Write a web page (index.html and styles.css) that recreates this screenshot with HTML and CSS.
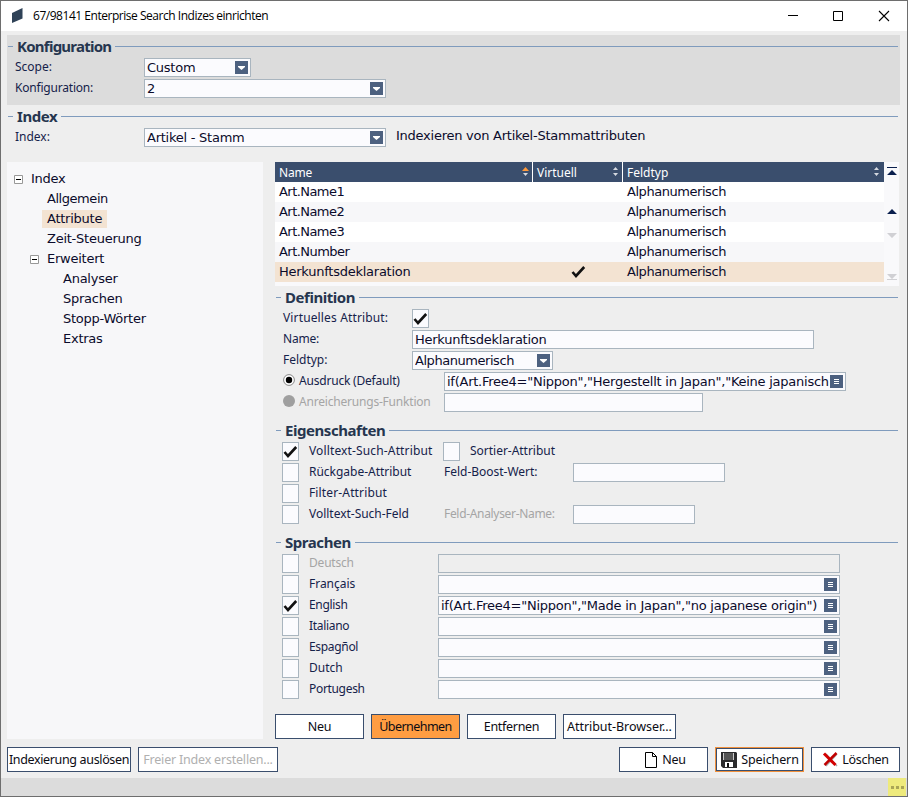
FILE: index.html
```html
<!DOCTYPE html>
<html lang="de">
<head>
<meta charset="utf-8">
<title>Enterprise Search Indizes einrichten</title>
<link rel="stylesheet" href="styles.css">
</head>
<body>
<svg class="defs" width="0" height="0" aria-hidden="true">
  <symbol id="check" viewBox="0 0 15 14"><path d="M1.500 7 5 11 13.200 2" fill="none" stroke="#111" stroke-width="2.600"/></symbol>
  <symbol id="drop" viewBox="0 0 13 13"><path d="M0 0h13v13H0z" fill="#4d6180"/><path d="M3 5h7v1L6.500 9 3 6z" fill="#fff"/></symbol>
  <symbol id="menu" viewBox="0 0 13 13"><path d="M0 0h13v13H0z" fill="#4d6180"/><path d="M4 4h5v1H4zM4 6h5v1H4zM4 8h5v1H4z" fill="#fff"/></symbol>
  <symbol id="minus" viewBox="0 0 9 9"><path d="M.5.5h8v8h-8z" fill="#fff" stroke="#989898"/><path d="M2 4h5v1H2z" fill="#000"/></symbol>
</svg>
<div class="window">
  <header class="titlebar">
    <svg class="logo" width="11" height="16" viewBox="0 0 11 16"><path d="M0 5 10.500 0v10.500L0 15z" fill="#2f4257"/></svg>
    <span class="caption">67/98141 Enterprise Search Indizes einrichten</span>
    <svg class="winctl" width="102" height="12" viewBox="0 0 102 12"><path d="M0 5.500h10M45.500 1.500h9v9h-9z" fill="none" stroke="#000"/><path d="M91 1l10 10M101 1 91 11" fill="none" stroke="#000" stroke-width="1.100"/></svg>
  </header>

  <section class="config">
    <h2 class="section"><span class="narrow">Konfiguration</span></h2>
    <div class="row"><label class="lbl">Scope:</label><div class="field w107"><span>Custom</span><svg><use href="#drop"/></svg></div></div>
    <div class="row"><label class="lbl tight">Konfiguration:</label><div class="field w242"><span>2</span><svg><use href="#drop"/></svg></div></div>
  </section>
  <section class="index">
    <h2 class="section"><span>Index</span></h2>
    <div class="row"><label class="lbl">Index:</label><div class="field w242"><span>Artikel - Stamm</span><svg><use href="#drop"/></svg></div><span class="hint">Indexieren von Artikel-Stammattributen</span></div>
  </section>

  <main class="main">
    <nav class="tree">
      <div class="node"><svg><use href="#minus"/></svg><span>Index</span></div>
      <div class="node l1"><span class="alpha">Allgemein</span></div>
      <div class="node l1 on"><span>Attribute</span></div>
      <div class="node l1"><span>Zeit-Steuerung</span></div>
      <div class="node l1e"><svg><use href="#minus"/></svg><span>Erweitert</span></div>
      <div class="node l2"><span>Analyser</span></div>
      <div class="node l2"><span>Sprachen</span></div>
      <div class="node l2"><span>Stopp-Wörter</span></div>
      <div class="node l2"><span>Extras</span></div>
    </nav>

    <div class="content">
      <div class="tablebox">
        <div class="table">
          <div class="tr th"><div><span class="tight">Name</span><svg class="sort"><path d="M0 4 3.500 0 7 4z" fill="#ff9a3c"/><path d="M1 6h5L3.500 9z" fill="#d5d9e0"/></svg></div><div><span>Virtuell</span><svg class="sort"><path d="M1 3 3.500 0 6 3zM1 6h5L3.500 9z" fill="#d5d9e0"/></svg></div><div><span>Feldtyp</span><svg class="sort"><path d="M1 3 3.500 0 6 3zM1 6h5L3.500 9z" fill="#d5d9e0"/></svg></div></div>
          <div class="tr"><div class="names">Art.Name1</div><div></div><div class="alpha">Alphanumerisch</div></div>
          <div class="tr"><div class="names">Art.Name2</div><div></div><div class="alpha">Alphanumerisch</div></div>
          <div class="tr"><div class="names">Art.Name3</div><div></div><div class="alpha">Alphanumerisch</div></div>
          <div class="tr"><div class="names">Art.Number</div><div></div><div class="alpha">Alphanumerisch</div></div>
          <div class="tr sel"><div>Herkunftsdeklaration</div><div class="mid"><svg class="chk"><use href="#check"/></svg></div><div class="alpha">Alphanumerisch</div></div>
        </div>
        <svg class="scroll" width="15" height="124" viewBox="0 0 15 124"><path d="M3 5h10v1H3zM3 13l5-5 5 5zM3 52l5-5 5 5z" fill="#0a1f4d"/><path d="M3 71h10l-5 5zM3 112h10l-5 5zM3 117h10v1H3z" fill="#d0d0d4"/></svg>
      </div>

      <section class="group defin">
        <h2 class="section"><span>Definition</span></h2>
        <div class="row"><label class="lbl loose">Virtuelles Attribut:</label><div class="box"><svg class="chk"><use href="#check"/></svg></div></div>
        <div class="row"><label class="lbl tight">Name:</label><div class="field w402"><span>Herkunftsdeklaration</span></div></div>
        <div class="row"><label class="lbl">Feldtyp:</label><div class="field w141"><span class="alpha">Alphanumerisch</span><svg><use href="#drop"/></svg></div></div>
        <div class="row radio"><svg class="rb" viewBox="0 0 12 12"><circle cx="6" cy="6" r="5.400" fill="#fff" stroke="#888"/><circle cx="6" cy="6" r="3.200" fill="#000"/></svg><label class="lbl tight">Ausdruck (Default)</label><div class="field w402"><span>if(Art.Free4="Nippon","Hergestellt in Japan","Keine japanisch</span><svg><use href="#menu"/></svg></div></div>
        <div class="row radio"><svg class="rb" viewBox="0 0 12 12"><circle cx="6" cy="6" r="6" fill="#9f9f9f"/></svg><label class="lbl off tight">Anreicherungs-Funktion</label><div class="field w259"></div></div>
      </section>

      <section class="group props">
        <h2 class="section"><span>Eigenschaften</span></h2>
        <div class="row"><div class="box"><svg class="chk"><use href="#check"/></svg></div><label class="lbl loose">Volltext-Such-Attribut</label><div class="box"></div><label class="lbl after">Sortier-Attribut</label></div>
        <div class="row"><div class="box"></div><label class="lbl">Rückgabe-Attribut</label><label class="lbl second">Feld-Boost-Wert:</label><div class="field w152"></div></div>
        <div class="row"><div class="box"></div><label class="lbl loose">Filter-Attribut</label></div>
        <div class="row"><div class="box"></div><label class="lbl">Volltext-Such-Feld</label><label class="lbl off second tighter">Feld-Analyser-Name:</label><div class="field w122"></div></div>
      </section>

      <section class="group langs">
        <h2 class="section"><span>Sprachen</span></h2>
        <div class="row"><div class="box"></div><label class="lbl off tight">Deutsch</label><div class="field w402 gray"></div></div>
        <div class="row"><div class="box"></div><label class="lbl">Français</label><div class="field w402"><span></span><svg><use href="#menu"/></svg></div></div>
        <div class="row"><div class="box"><svg class="chk"><use href="#check"/></svg></div><label class="lbl tighter">English</label><div class="field w402"><span>if(Art.Free4="Nippon","Made in Japan","no japanese origin")</span><svg><use href="#menu"/></svg></div></div>
        <div class="row"><div class="box"></div><label class="lbl tighter">Italiano</label><div class="field w402"><span></span><svg><use href="#menu"/></svg></div></div>
        <div class="row"><div class="box"></div><label class="lbl tighter">Espagñol</label><div class="field w402"><span></span><svg><use href="#menu"/></svg></div></div>
        <div class="row"><div class="box"></div><label class="lbl">Dutch</label><div class="field w402"><span></span><svg><use href="#menu"/></svg></div></div>
        <div class="row"><div class="box"></div><label class="lbl tighter">Portugesh</label><div class="field w402"><span></span><svg><use href="#menu"/></svg></div></div>
      </section>

      <div class="actions">
        <button class="btn">Neu</button><button class="btn hot">Übernehmen</button><button class="btn">Entfernen</button><button class="btn w113">Attribut-Browser...</button>
      </div>
    </div>
  </main>

  <footer class="footer">
    <button class="btn w124">Indexierung auslösen</button><button class="btn w140 dis">Freier Index erstellen...</button>
    <span class="spring"></span>
    <button class="btn new"><svg width="12" height="16" viewBox="0 0 12 16"><path d="M.5.5h7l4 4v11H.5z" fill="#fff" stroke="#000"/><path d="M7.500.5v4h4" fill="none" stroke="#000"/></svg><span>Neu</span></button>
    <button class="btn focus"><svg width="16" height="16" viewBox="0 0 16 16"><path d="M0 0h15l1 1v15H2l-2-2z" fill="#2b2b2d"/><path d="M3 1h9v7H3z" fill="#555"/><path d="M2 1h1v7H2zM12 1h1v7h-1z" fill="#ccc"/><path d="M4 10h8v5H4z" fill="#fff"/><path d="M6 11h2v4H6z" fill="#111"/></svg><span>Speichern</span></button>
    <button class="btn"><svg width="16" height="15" viewBox="0 0 16 15"><path d="M4 2l11 12M15 2 4 14" stroke="#aaa" stroke-width="1.500"/><path d="M2 1.500 13.500 13" stroke="#d40000" stroke-width="3"/><path d="M14.500 1 2.500 13" stroke="#c00000" stroke-width="2.500"/></svg><span>Löschen</span></button>
  </footer>
  <div class="status"><div class="grip"><i></i><i></i><i></i></div></div>
</div>
</body>
</html>
```
FILE: styles.css
```css
* { box-sizing: border-box; }
body { margin: 0; font: 13px/19px "DejaVu Sans", sans-serif; color: #0b0b2b; letter-spacing: -0.25px; }
svg { display: block; flex: none; }
.defs { position: absolute; }
.window { width: 908px; height: 797px; border: 1px solid #6e6e6e; background: #eee; display: flex; flex-direction: column; overflow: hidden; }
.titlebar { height: 30px; flex: none; background: #fff; display: flex; align-items: center; padding: 0 17px 0 11px; }
.caption { font: 12px/16px "Open Sans", sans-serif; letter-spacing: -0.47px; color: #000; margin-left: 10px; flex: 1; }
.winctl { margin-top: -1px; }

.section { margin: 0; height: 23px; display: flex; align-items: center; gap: 4px; font: bold 15px/20px "Noto Sans", sans-serif; letter-spacing: -0.45px; color: #26364f; white-space: nowrap; }
.section span { height: 22px; }
.section .narrow { letter-spacing: -0.75px; }
.section::before, .section::after { content: ""; height: 1px; background: #7f9bbd; width: 5px; }
.section::after { flex: 1; }
.row { display: flex; height: 19px; margin-bottom: 2px; }
.lbl { font: 12px/18px "Noto Sans", sans-serif; letter-spacing: -0.02px; color: #15224a; flex: none; white-space: nowrap; }
.loose { letter-spacing: 0.14px; }
.tight { letter-spacing: -0.2px; }
.tighter { letter-spacing: -0.32px; }
.off { color: #a5a5a5; }
.alpha { letter-spacing: -0.45px; }
.names { letter-spacing: -0.55px; }
.field { height: 19px; border: 1px solid #a9b5bf; background: #fbfbfe; display: flex; align-items: center; padding: 0 2px; flex: none; line-height: 17px; }
.field span { flex: 1; overflow: hidden; white-space: nowrap; }
.field svg { width: 13px; height: 13px; margin-left: 1px; }
.gray { background: #eee; }
.box { width: 17px; height: 19px; border: 1px solid #a9b5bf; background: #fbfbfe; flex: none; padding: 2px 0 0 0; }
.chk { width: 15px; height: 14px; }
.w107 { width: 107px; } .w242 { width: 242px; } .w402 { width: 402px; } .w141 { width: 141px; }
.w259 { width: 259px; } .w152 { width: 152px; } .w122 { width: 122px; }

.config { margin: 4px 7px 0 6px; height: 70px; background: #dcdcdc; padding: 0 2px 0 1px; flex: none; }
.index { margin: 0 9px 0 7px; height: 57px; flex: none; }
.config .lbl, .index .lbl { width: 129px; margin-left: 7px; }
.hint { margin-left: 10px; line-height: 15px; }

.main { display: flex; gap: 12px; margin-left: 6px; height: 577px; flex: none; }
.tree { width: 256px; background: #f7f7f9; padding-top: 7px; }
.node { height: 20px; display: flex; align-items: center; padding-left: 7px; }
.node svg { width: 9px; height: 9px; margin-right: 4px; }
.node span { padding: 0 4px; height: 18px; line-height: 18px; }
.l1 { padding-left: 36px; } .l1e { padding-left: 23px; } .l2 { padding-left: 52px; }
.on { padding-left: 35px; }
.node.on span { background: #f3e3d2; padding: 0 5px; }

.content { width: 624px; display: flex; flex-direction: column; }
.tablebox { height: 124px; display: flex; background: #f9f9fb; }
.table { width: 609px; }
.tr { display: grid; grid-template-columns: 258px 90px 261px; height: 20px; line-height: 20px; background: #f7f7f9; }
.tr:nth-child(even) { background: #fff; }
.tr > div { padding-left: 4px; }
.tr.sel { background: #f3e3d2; }
.tr.th { background: #3a4e6d; color: #fff; font: 12px/22px "Noto Sans", sans-serif; letter-spacing: 0; }
.th > div { display: flex; justify-content: space-between; padding-right: 3px; border-right: 1px solid #fff; height: 20px; }
.th > div:last-child { border: 0; padding-right: 4px; }
.sort { width: 7px; height: 9px; margin-top: 5px; }
.tr > .mid { display: flex; align-items: center; justify-content: center; padding: 0; }

.group { width: 623px; padding-left: 1px; }
.group .row { margin-left: 6px; }
.defin .row .lbl { width: 129px; margin-left: 1px; }
.defin .radio .lbl { width: 145px; margin-left: 4px; line-height: 17px; }
.rb { width: 12px; height: 12px; margin: 2px 0 0 1px; }
.props, .langs { margin-top: 5px; }
.props .lbl { width: 134px; margin-left: 10px; }
.props .second { width: 129px; margin-left: 1px; }
.langs .lbl { width: 129px; margin-left: 10px; }
.actions { display: flex; gap: 7px; margin-top: 13px; }

.btn { width: 89px; height: 25px; border: 1px solid #3a4e6d; background: #fff; padding: 0; margin: 0; color: #0c0c14; font: 12.5px/20px "Noto Sans", sans-serif; letter-spacing: -0.3px; display: flex; align-items: center; justify-content: center; gap: 4px; white-space: nowrap; }
.hot { background: #ff9d42; letter-spacing: -0.55px; }
.dis { color: #b0b0b0; letter-spacing: -0.2px; }
.w113 { width: 113px; letter-spacing: -0.05px; } .w124 { width: 124px; letter-spacing: -0.35px; } .w140 { width: 140px; }
.new { gap: 5px; padding-left: 4px; }
.btn.focus { border-color: #f0903c; box-shadow: inset 0 0 0 1px #3a4e6d; letter-spacing: -0.1px; outline: none; padding-left: 1px; }
.footer { display: flex; gap: 7px; margin: 8px 7px 0 6px; height: 31px; flex: none; }
.spring { flex: 1; }
.status { height: 18px; background: #dcdcdc; display: flex; justify-content: flex-end; padding-right: 1px; flex: none; }
.grip { width: 18px; background: #eeea7c; display: flex; gap: 2px; padding: 8px 0 0 3px; }
.grip i { width: 3px; height: 3px; background: #aaa556; }
```
